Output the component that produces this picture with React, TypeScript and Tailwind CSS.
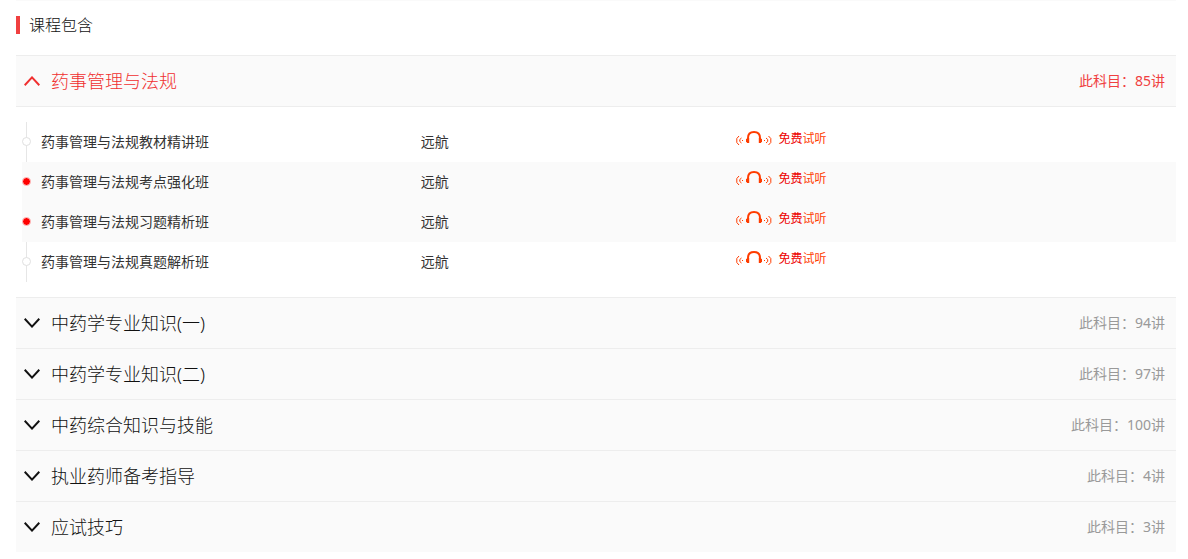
import { useState } from 'react';

interface Lesson {
    id: number;
    name: string;
    teacher: string;
    active: boolean;
}

interface Subject {
    id: number;
    title: string;
    count: number;
    lessons: Lesson[];
}

const subjects: Subject[] = [
    {
        id: 1,
        title: '药事管理与法规',
        count: 85,
        lessons: [
            { id: 1, name: '药事管理与法规教材精讲班', teacher: '远航', active: false },
            { id: 2, name: '药事管理与法规考点强化班', teacher: '远航', active: true },
            { id: 3, name: '药事管理与法规习题精析班', teacher: '远航', active: true },
            { id: 4, name: '药事管理与法规真题解析班', teacher: '远航', active: false },
        ],
    },
    { id: 2, title: '中药学专业知识(一)', count: 94, lessons: [] },
    { id: 3, title: '中药学专业知识(二)', count: 97, lessons: [] },
    { id: 4, title: '中药综合知识与技能', count: 100, lessons: [] },
    { id: 5, title: '执业药师备考指导', count: 4, lessons: [] },
    { id: 6, title: '应试技巧', count: 3, lessons: [] },
];

function Chevron({ open }: { open: boolean }) {
    return (
        <svg width="16" height="10" viewBox="0 0 16 10" fill="none" stroke="currentColor" strokeWidth="2" aria-hidden="true">
            <path d={open ? 'M0.7 9.2 L8 1.4 L15.3 9.2' : 'M0.7 0.8 L8 8.6 L15.3 0.8'} />
        </svg>
    );
}

function Headphones() {
    return (
        <svg width="36" height="16" viewBox="0 0 36 16" fill="none" stroke="#ff3c00" aria-hidden="true">
            {/* headband and ear cups */}
            <path d="M12 9 V7 C12 3 14.5 1 18 1 C21.5 1 24 3 24 7 V9" strokeWidth="2" />
            <path d="M12 7 V12 M24 7 V12" strokeWidth="2.4" />
            <path d="M10.5 8 V11 M25.5 8 V11" />
            {/* sound waves */}
            <path d="M3 5 L0.8 7.5 V11.5 L3 14 M5.5 7 L3.8 8.5 V10.5 L5.5 12 M32.5 5 L34.8 7.5 V11.5 L32.5 14 M30 7 L31.7 8.5 V10.5 L30 12" />
            <path d="M6 9.5 H7 M28 9.5 H29" />
        </svg>
    );
}

function LessonMarker({ active }: { active: boolean }) {
    return (
        <span className="relative flex h-10 w-[9px] items-center justify-center pb-px">
            {!active && <span className="absolute inset-y-0 left-1 w-px bg-[#e6e6e6]" />}
            {active ? (
                <span className="relative size-[9px] rounded-full border border-[#ffcaca] bg-[#ff0000]" />
            ) : (
                <span className="relative size-[9px] rounded-full border border-[#e0e0e0] bg-white" />
            )}
        </span>
    );
}

function LessonTable({ lessons }: { lessons: Lesson[] }) {
    return (
        <div className="border-t border-[#ededed] py-[15px] pl-1.5">
            <table className="w-full table-fixed text-sm text-[#333]">
                <tbody>
                    {lessons.map((lesson) => (
                        <tr key={lesson.id} className={lesson.active ? 'bg-[#fafafa]' : ''}>
                            <td className="h-10 w-[33%] p-0">
                                <div className="flex items-center gap-2.5">
                                    <LessonMarker active={lesson.active} />
                                    {lesson.name}
                                </div>
                            </td>
                            <td className="w-[27%] py-0 pr-0 pl-[18px]">{lesson.teacher}</td>
                            <td className="py-0 pr-0 pl-[22px]">
                                <a href="#" className="flex items-center gap-1.5 pb-1.5 text-xs text-[#ff3c00]">
                                    <Headphones />
                                    <span>
                                        <span className="text-[#ee0000]">免费</span>试听
                                    </span>
                                </a>
                            </td>
                        </tr>
                    ))}
                </tbody>
            </table>
        </div>
    );
}

export default function App() {
    const [openId, setOpenId] = useState<number | null>(1);

    return (
        <main className='bg-white px-3 pl-4 font-["Noto_Sans","Noto_Sans_CJK_SC",sans-serif]'>
            <section className="border-t border-[#fafafa]">
                <div className="flex h-[54px] items-start pt-[15px]">
                    <h2 className="flex items-center gap-[9px] text-base leading-[18px] font-light text-[#111]">
                        <span className="h-[18px] w-1 bg-[#f04040]" />
                        课程包含
                    </h2>
                </div>

                {subjects.map((subject) => {
                    const open = subject.id === openId;
                    return (
                        <div key={subject.id} className="border-t border-[#ededed]">
                            <button
                                type="button"
                                aria-expanded={open}
                                onClick={() => setOpenId(open ? null : subject.id)}
                                className={`flex h-[50px] w-full items-center bg-[#fafafa] pr-[11px] pl-2 ${open ? 'text-[#f03030]' : 'text-[#111]'}`}
                            >
                                <Chevron open={open} />
                                <span className="ml-[11px] text-lg font-light">{subject.title}</span>
                                <span className={`ml-auto text-sm ${open ? 'text-[#f04040]' : 'text-[#999]'}`}>
                                    此科目：{subject.count}讲
                                </span>
                            </button>
                            {open && subject.lessons.length > 0 && <LessonTable lessons={subject.lessons} />}
                        </div>
                    );
                })}
            </section>
        </main>
    );
}
